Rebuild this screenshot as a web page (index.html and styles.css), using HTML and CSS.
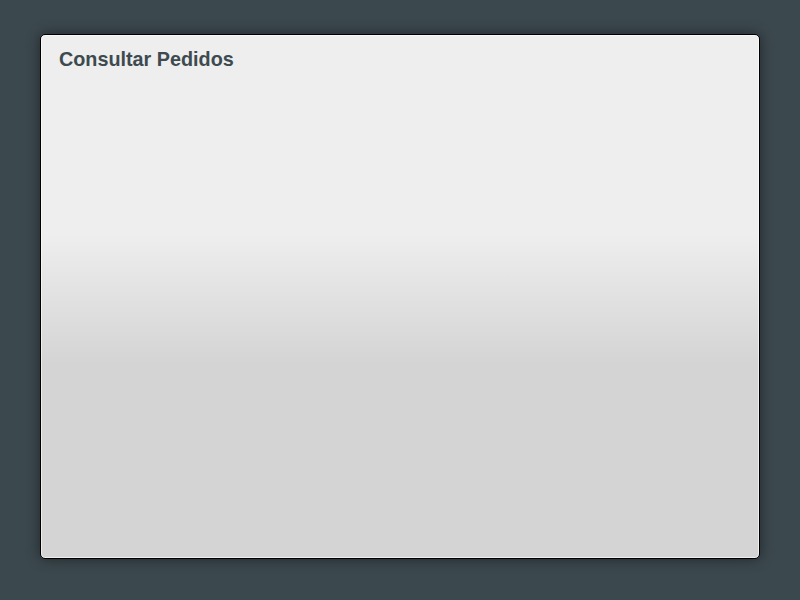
FILE: index.html
```html
<!DOCTYPE html>
<html>
<head>
<meta charset="utf-8">
<link rel="stylesheet" href="styles.css">
</head>
<body>
<div class="panel">
  <h1 class="title">Consultar Pedidos</h1>
</div>
</body>
</html>
```
FILE: styles.css
```css
html, body { margin: 0; padding: 0; }
body {
  background: #3b484e;
  width: 800px;
  height: 600px;
  overflow: hidden;
  font-family: "Liberation Sans", Arial, sans-serif;
}
.panel {
  box-sizing: border-box;
  margin: 34px 0 0 40px;
  width: 720px;
  height: 525px;
  border: 1px solid #000;
  border-radius: 5px;
  box-shadow: inset 0 0 0 1px rgba(255,255,255,0.6), 0 0 14px rgba(0,0,0,0.45);
  background: linear-gradient(to bottom, #eeeeee 0%, #eeeeee 38%, #d4d4d4 63%, #d4d4d4 100%);
  padding: 12px 18px;
}
.title {
  margin: 0;
  font-size: 19.8px;
  font-weight: bold;
  line-height: 24px;
  color: #3d4a4f;
}
```
